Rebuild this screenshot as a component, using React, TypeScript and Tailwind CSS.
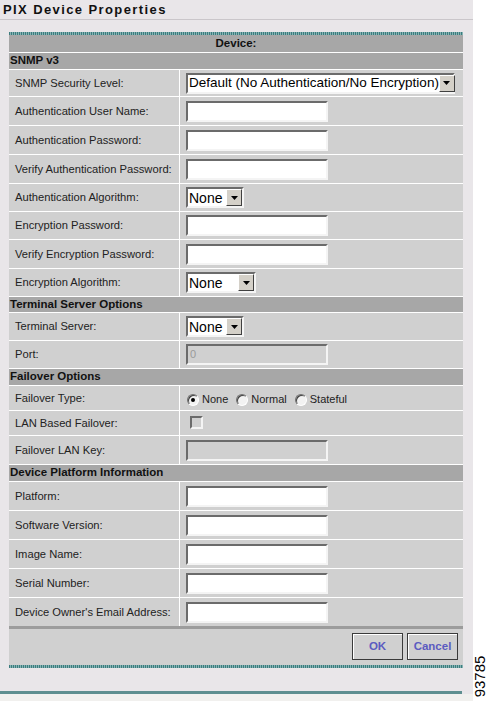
import React from 'react';

const sans = { fontFamily: '"Liberation Sans", Arial, sans-serif' };

// classic inset field border
const inset = 'border-2 border-t-[#6b6b6b] border-l-[#6b6b6b] border-b-[#f4f4f4] border-r-[#f4f4f4]';

const TextBox = ({ disabled, value }: { disabled?: boolean; value?: string }) => (
  <div className={`w-[142px] h-[21px] ${inset} ${disabled ? 'bg-[#d0d0d0]' : 'bg-white'} flex items-center pl-[2px] text-[11px] text-[#9a9a9a]`}>
    {value}
  </div>
);

const Select = ({ text, width, size = 'text-[14px]' }: { text: string; width: string; size?: string }) => (
  <div className={`${width} h-[21px] ${inset} bg-white flex items-center justify-between`}>
    <span className={`pl-[1px] ${size} leading-none text-black whitespace-nowrap`}>{text}</span>
    <span className="w-[16px] h-[17px] shrink-0 bg-[#d4d0c8] border border-t-white border-l-white border-b-[#404040] border-r-[#404040] flex items-center justify-center">
      <svg width="7" height="4" viewBox="0 0 7 4"><path d="M0 0h7L3.5 4z" fill="#000" /></svg>
    </span>
  </div>
);

const Radio = ({ label, checked }: { label: string; checked?: boolean }) => (
  <label className="flex items-center gap-[3px] mr-[8px]">
    <span className="w-[12px] h-[12px] rounded-full bg-[#f2f2f2] border border-t-[#707070] border-l-[#707070] border-b-white border-r-white flex items-center justify-center shadow-[inset_1px_1px_0_#404040]">
      {checked && <span className="w-[4px] h-[4px] rounded-full bg-black" />}
    </span>
    <span className="text-[11px] text-[#222]">{label}</span>
  </label>
);

const Row = ({ label, h, children }: { label: string; h: string; children?: React.ReactNode }) => (
  <div className={`flex ${h} gap-px`}>
    <div className="w-[170px] bg-[#d0d0d0] flex items-center pl-[6px] text-[11.2px] text-[#222]">{label}</div>
    <div className="flex-1 bg-[#d0d0d0] flex items-center pl-[6px]">{children}</div>
  </div>
);

const Section = ({ title, h }: { title: string; h: string }) => (
  <div className={`${h} bg-[#a7a7a7] flex items-center pl-[1px] text-[11.5px] font-bold text-[#111]`}>{title}</div>
);

const teal = 'h-[3px] bg-[repeating-linear-gradient(90deg,#3c7c7e_0_1px,#86b4b4_1px_2px)]';

export default function App() {
  return (
    <div className="relative w-[488px] h-[701px] bg-white flex" style={sans}>
      <div className="w-[473px] h-[701px] bg-[#e9e6e9] flex flex-col">
        <div className="h-[20px] border-b border-[#cac6ca] pl-[3px] pt-[3px]">
          <h1 className="text-[13px] leading-[14px] font-bold tracking-[1.4px] text-[#111]">
            PIX Device Properties
          </h1>
        </div>

        <div className="ml-[9px] mt-[12px] w-[454px] flex flex-col">
          <div className={teal} />
          <div className="flex flex-col gap-px bg-white">
            <div className="h-[17px] bg-[#a7a7a7] flex items-center justify-center text-[11.5px] font-bold text-[#111]">Device:</div>

            <Section title="SNMP v3" h="h-[16px]" />
            <Row label="SNMP Security Level:" h="h-[26px]">
              <Select text="Default (No Authentication/No Encryption)" width="w-[269px]" size="text-[13.5px]" />
            </Row>
            <Row label="Authentication User Name:" h="h-[28px]"><TextBox /></Row>
            <Row label="Authentication Password:" h="h-[28px]"><TextBox /></Row>
            <Row label="Verify Authentication Password:" h="h-[28px]"><TextBox /></Row>
            <Row label="Authentication Algorithm:" h="h-[27px]">
              <Select text="None" width="w-[58px]" />
            </Row>
            <Row label="Encryption Password:" h="h-[27px]"><TextBox /></Row>
            <Row label="Verify Encryption Password:" h="h-[28px]"><TextBox /></Row>
            <Row label="Encryption Algorithm:" h="h-[27px]">
              <Select text="None" width="w-[70px]" />
            </Row>

            <Section title="Terminal Server Options" h="h-[15px]" />
            <Row label="Terminal Server:" h="h-[27px]">
              <Select text="None" width="w-[58px]" />
            </Row>
            <Row label="Port:" h="h-[27px]"><TextBox disabled value="0" /></Row>

            <Section title="Failover Options" h="h-[16px]" />
            <Row label="Failover Type:" h="h-[24px]">
              <div className="flex items-center pl-[1px] pt-[3px]">
                <Radio label="None" checked />
                <Radio label="Normal" />
                <Radio label="Stateful" />
              </div>
            </Row>
            <Row label="LAN Based Failover:" h="h-[24px]">
              <span className={`ml-[4px] -mt-[2px] w-[13px] h-[13px] bg-[#d0d0d0] ${inset}`} />
            </Row>
            <Row label="Failover LAN Key:" h="h-[28px]"><TextBox disabled /></Row>

            <Section title="Device Platform Information" h="h-[16px]" />
            <Row label="Platform:" h="h-[28px]"><TextBox /></Row>
            <Row label="Software Version:" h="h-[28px]"><TextBox /></Row>
            <Row label="Image Name:" h="h-[28px]"><TextBox /></Row>
            <Row label="Serial Number:" h="h-[28px]"><TextBox /></Row>
            <Row label="Device Owner's Email Address:" h="h-[28px]"><TextBox /></Row>
          </div>
          <div className="h-[3px] bg-[#9c9c9c]" />
          <div className="h-[36px] bg-[#d0d0d0] flex justify-end items-start pt-[4px] pr-[5px] gap-[4px]">
            <button className="w-[51px] h-[27px] border border-[#3a3a3a] shadow-[inset_1px_1px_0_#ffffff] bg-[#d0d0d0] text-[11.5px] font-bold text-[#5b5bc0]">OK</button>
            <button className="w-[51px] h-[27px] border border-[#3a3a3a] shadow-[inset_1px_1px_0_#ffffff] bg-[#d0d0d0] text-[11.5px] font-bold text-[#5b5bc0]">Cancel</button>
          </div>
          <div className={teal} />
        </div>

        <div className="mt-[23px] w-[462px] h-[3px] bg-[#5e8f90]" />
        <div className="flex-1 bg-[#f1f0ee]" />
      </div>

      <span className="absolute right-[-13px] bottom-[17px] -rotate-90 text-[15px] leading-none text-black">93785</span>
    </div>
  );
}
